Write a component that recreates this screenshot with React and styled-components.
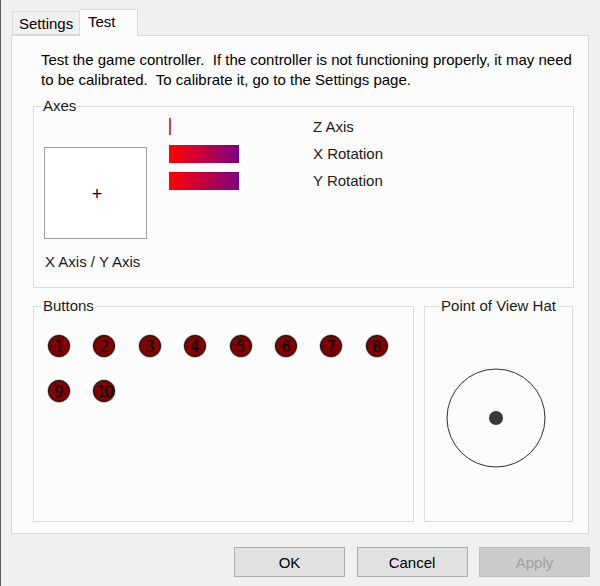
import React from 'react';
import styled, { createGlobalStyle } from 'styled-components';

const GlobalStyle = createGlobalStyle`
  html, body {
    margin: 0;
    padding: 0;
    background: #f0f0f0;
  }
  body {
    font-family: "Liberation Sans", Arial, sans-serif;
    font-size: 15px;
    color: #000;
  }
  * {
    box-sizing: border-box;
  }
`;

const Window = styled.div`
  width: 600px;
  height: 586px;
  background: #f0f0f0;
  border-left: 1px solid #5c5c5c;
  display: flex;
  flex-direction: column;
  overflow: hidden;
`;

const TabStrip = styled.div`
  height: 35px;
  padding-left: 11px;
  display: flex;
  align-items: flex-end;
`;

const Tab = styled.div`
  position: relative;
  width: ${({ $w }) => $w}px;
  height: ${({ $active }) => ($active ? 27 : 24)}px;
  margin-bottom: ${({ $active }) => ($active ? -1 : 0)}px;
  padding-left: ${({ $pad }) => $pad}px;
  padding-bottom: ${({ $active }) => ($active ? 3 : 0)}px;
  display: flex;
  align-items: center;
  background: ${({ $active }) => ($active ? '#fcfcfc' : '#f0f0f0')};
  border: 1px solid #d9d9d9;
  border-bottom: ${({ $active }) => ($active ? 'none' : '1px solid #d9d9d9')};
  border-left: ${({ $active }) => ($active ? 'none' : '1px solid #d9d9d9')};
  z-index: ${({ $active }) => ($active ? 2 : 1)};
  color: #000;
`;

const Panel = styled.div`
  width: 578px;
  height: 499px;
  margin-left: 10px;
  background: #fcfcfc;
  border: 1px solid #d9d9d9;
  padding: 14px 14px 0 21px;
  display: flex;
  flex-direction: column;
`;

const Intro = styled.p`
  margin: 0 0 0 8px;
  line-height: 20px;
  white-space: pre;
  color: #000;
`;

const Group = styled.div`
  position: relative;
  width: ${({ $w }) => $w}px;
  height: ${({ $h }) => $h}px;
  border: 1px solid #dcdcdc;
  margin-top: ${({ $mt }) => $mt || 0}px;
`;

const Legend = styled.span`
  position: absolute;
  top: -11px;
  left: ${({ $center }) => ($center ? '50%' : '7px')};
  transform: ${({ $center }) => ($center ? 'translateX(-50%)' : 'none')};
  padding: 0 2px;
  line-height: 20px;
  background: #fcfcfc;
  white-space: nowrap;
  color: #1a1a1a;
`;

const AxesBody = styled.div`
  display: flex;
  gap: 22px;
  padding-left: 10px;
`;

const XYCol = styled.div`
  width: 103px;
  padding-top: 40px;
`;

const XYBox = styled.div`
  width: 103px;
  height: 92px;
  border: 1px solid #a0a0a0;
  background: #fff;
  display: flex;
  align-items: center;
  justify-content: center;
  padding: 3px 0 0 3px;
  font-size: 18px;
  color: #000;
`;

const XYLabel = styled.div`
  margin-top: 13px;
  padding-left: 1px;
  line-height: 20px;
  white-space: nowrap;
  color: #1a1a1a;
`;

const AxisList = styled.div`
  padding-top: 6px;
  display: flex;
  flex-direction: column;
`;

const AxisRow = styled.div`
  height: 27px;
  display: flex;
  align-items: center;
`;

const BarSlot = styled.div`
  width: 144px;
  display: flex;
  align-items: center;
`;

const Bar = styled.div`
  width: ${({ $w }) => $w}px;
  height: ${({ $h }) => $h}px;
  background: ${({ $w }) =>
    $w > 4 ? 'linear-gradient(to right, #ff0000 0%, #c8003c 45%, #7d007f 100%)' : '#e8383c'};
`;

const AxisName = styled.span`
  color: #1a1a1a;
`;

const BottomRow = styled.div`
  display: flex;
  gap: 10px;
  margin-top: 18px;
`;

const ButtonGrid = styled.div`
  display: grid;
  grid-template-columns: repeat(8, 22px);
  column-gap: 23.4px;
  row-gap: 23px;
  padding: 28px 0 0 14px;
`;

const JoyButton = styled.div`
  width: 22px;
  height: 22px;
  border-radius: 50%;
  background: #800000;
  border: 1px solid #111;
  box-shadow: 0 0 0 0.5px #9a9a9a;
  display: flex;
  align-items: center;
  justify-content: center;
  font-family: "Liberation Sans Narrow", "DejaVu Sans Condensed", "Liberation Sans", sans-serif;
  font-size: 16px;
  letter-spacing: ${({ $wide }) => ($wide ? '-1.5px' : '0')};
  color: #000;
  overflow: hidden;
`;

const HatBody = styled.div`
  display: flex;
  justify-content: center;
  padding: 61px 5px 0 0;
`;

const Footer = styled.div`
  display: flex;
  justify-content: flex-end;
  gap: 11.5px;
  padding: 13px 10px 0 0;
`;

const DialogButton = styled.button`
  width: 111px;
  height: 30px;
  font-family: "Liberation Sans", Arial, sans-serif;
  font-size: 15px;
  background: ${({ disabled }) => (disabled ? '#cccccc' : '#e1e1e1')};
  color: ${({ disabled }) => (disabled ? '#a0a0a0' : '#000')};
  border: 1px solid ${({ disabled }) => (disabled ? '#bfbfbf' : '#adadad')};
  border-radius: 0;
  padding: 0;
`;

const axes = [
  { name: 'Z Axis', w: 2, h: 17 },
  { name: 'X Rotation', w: 70, h: 18 },
  { name: 'Y Rotation', w: 70, h: 18 },
];

const buttons = [1, 2, 3, 4, 5, 6, 7, 8, 9, 10];

export default function App() {
  return (
    <Window>
      <GlobalStyle />
      <TabStrip>
        <Tab $w={68} $pad={6}>Settings</Tab>
        <Tab $w={58} $pad={8} $active>Test</Tab>
      </TabStrip>
      <Panel>
        <Intro>
          {'Test the game controller.  If the controller is not functioning properly, it may need\nto be calibrated.  To calibrate it, go to the Settings page.'}
        </Intro>

        <Group $w={541} $h={182} $mt={16}>
          <Legend>Axes</Legend>
          <AxesBody>
            <XYCol>
              <XYBox>+</XYBox>
              <XYLabel>X Axis / Y Axis</XYLabel>
            </XYCol>
            <AxisList>
              {axes.map(a => (
                <AxisRow key={a.name}>
                  <BarSlot>
                    <Bar $w={a.w} $h={a.h} />
                  </BarSlot>
                  <AxisName>{a.name}</AxisName>
                </AxisRow>
              ))}
            </AxisList>
          </AxesBody>
        </Group>

        <BottomRow>
          <Group $w={381} $h={216}>
            <Legend>Buttons</Legend>
            <ButtonGrid>
              {buttons.map(n => (
                <JoyButton key={n} $wide={n > 9}>{n}</JoyButton>
              ))}
            </ButtonGrid>
          </Group>
          <Group $w={149} $h={216}>
            <Legend $center>Point of View Hat</Legend>
            <HatBody>
              <svg width="100" height="100" viewBox="0 0 100 100">
                <circle cx="50" cy="50" r="49" fill="none" stroke="#2e2e2e" strokeWidth="1" />
                <circle cx="50" cy="50" r="7" fill="#383838" />
              </svg>
            </HatBody>
          </Group>
        </BottomRow>
      </Panel>
      <Footer>
        <DialogButton>OK</DialogButton>
        <DialogButton>Cancel</DialogButton>
        <DialogButton disabled>Apply</DialogButton>
      </Footer>
    </Window>
  );
}
